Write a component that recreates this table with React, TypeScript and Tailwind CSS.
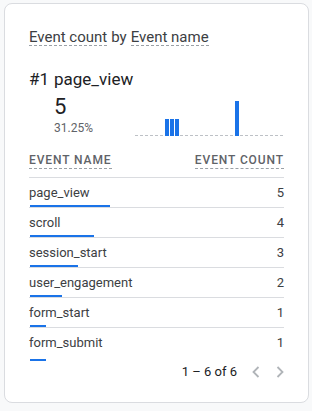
import React from "react";

const rows = [
  { name: "page_view", value: 5 },
  { name: "scroll", value: 4 },
  { name: "session_start", value: 3 },
  { name: "user_engagement", value: 2 },
  { name: "form_start", value: 1 },
  { name: "form_submit", value: 1 },
];

function Spark() {
  const bars = [
    { x: 30, h: 17 },
    { x: 35, h: 17 },
    { x: 40, h: 17 },
    { x: 100, h: 35 },
  ];
  return (
    <svg width="149" height="36" viewBox="0 0 149 36" className="block">
      <line x1="0" y1="35.5" x2="149" y2="35.5" stroke="#bdc1c6" strokeWidth="1" strokeDasharray="3 2" />
      {bars.map((b, i) => (
        <rect key={i} x={b.x} y={36 - b.h} width="4" height={b.h} fill="#1a73e8" />
      ))}
    </svg>
  );
}

export default function App() {
  return (
    <div className="w-[312px] h-[411px] bg-[#f8f9fa] pt-[3px] pl-[4px]" style={{ fontFamily: "Roboto, 'Liberation Sans', sans-serif" }}>
      <div className="w-[305px] h-[400px] bg-white border border-[#dadce0] rounded-[8px] px-[24px] pt-[25px] flex flex-col">
        <div className="flex">
          <span className="text-[15px] leading-4 text-[#3c4043] border-b border-dashed border-[#9aa0a6]">Event count</span>
          <span className="text-[15px] leading-4 text-[#3c4043] mx-[4px]">by</span>
          <span className="text-[15px] leading-4 text-[#3c4043] border-b border-dashed border-[#9aa0a6]">Event name</span>
        </div>

        <div className="mt-[21px] flex text-[17px] leading-6 text-[#202124]">
          <span className="w-[25px]">#1</span>
          <span>page_view</span>
        </div>
        <div className="flex items-end justify-between">
          <div className="ml-[25px] flex flex-col">
            <span className="mt-[3px] text-[22px] leading-[26px] text-[#202124]">5</span>
            <span className="text-[12px] leading-4 text-[#5f6368]">31.25%</span>
          </div>
          <Spark />
        </div>

        <div className="mt-[16px] flex justify-between items-start pb-[8px] border-b border-[#dadce0]">
          <span className="text-[12px] leading-4 font-medium tracking-[0.9px] text-[#5f6368] border-b border-dashed border-[#9aa0a6]">EVENT NAME</span>
          <span className="text-[12px] leading-4 font-medium tracking-[0.9px] text-[#5f6368] border-b border-dashed border-[#9aa0a6]">EVENT COUNT</span>
        </div>

        {rows.map((r, i) => (
          <div key={r.name} className={i < rows.length - 1 ? "border-b border-[#dadce0]" : ""}>
            <div className="pt-[7px] flex justify-between text-[13px] leading-4 text-[#3c4043]">
              <span>{r.name}</span>
              <span>{r.value}</span>
            </div>
            <div className={i < rows.length - 1 ? "mt-[4px] h-[2px] ml-[1px] bg-[#1a73e8]" : "mt-[8px] h-[2px] ml-[1px] bg-[#1a73e8]"} style={{ width: r.value * 16 }} />
          </div>
        ))}

        <div className="mt-[3px] flex justify-end items-center">
          <span className="text-[13px] leading-4 text-[#202124]">1 – 6 of 6</span>
          <svg width="8" height="12" viewBox="0 0 8 12" className="ml-[15px]">
            <polyline points="6.5,1 1.5,6 6.5,11" fill="none" stroke="#b0b4b8" strokeWidth="1.8" />
          </svg>
          <svg width="8" height="12" viewBox="0 0 8 12" className="ml-[16px]">
            <polyline points="1.5,1 6.5,6 1.5,11" fill="none" stroke="#b0b4b8" strokeWidth="1.8" />
          </svg>
        </div>
      </div>
    </div>
  );
}
